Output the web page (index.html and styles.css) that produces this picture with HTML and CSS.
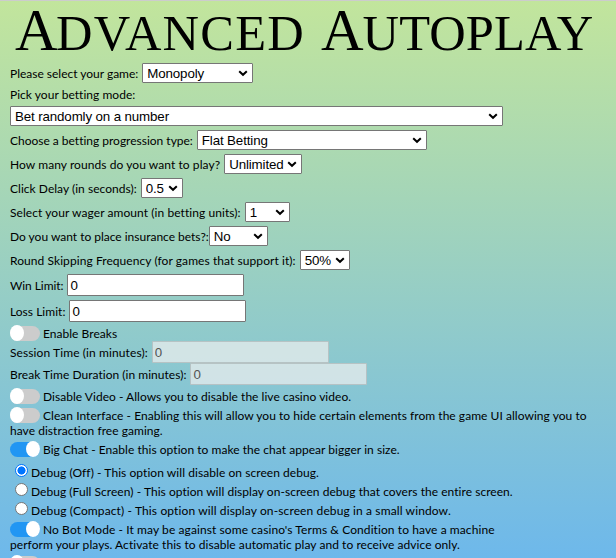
FILE: index.html
```html
<!DOCTYPE html>
<html lang="en">
<head>
<meta charset="utf-8">
<title>Advanced Autoplay</title>
<link rel="stylesheet" href="styles.css">
</head>
<body>
<svg width="0" height="0" class="defs"><symbol id="chev" viewBox="0 0 10 7"><path d="M1.2 1.2 5 4.8 8.8 1.2" fill="none" stroke="#000" stroke-width="2"/></symbol></svg>
<main class="panel">
  <h1 class="title"><span class="word first"><span class="cap">A</span>DVANCED</span><span class="word second"><span class="cap">A</span>UTOPLAY</span></h1>
  <div class="row snug"><label>Please select your game:</label><span class="pick w111"><select><option>Monopoly</option></select><svg><use href="#chev"/></svg></span></div>
  <div class="row caption"><label>Pick your betting mode:</label></div>
  <div class="row"><span class="pick w493"><select><option>Bet randomly on a number</option></select><svg><use href="#chev"/></svg></span></div>
  <div class="row snug"><label>Choose a betting progression type:</label><span class="pick w230"><select><option>Flat Betting</option></select><svg><use href="#chev"/></svg></span></div>
  <div class="row loose"><label>How many rounds do you want to play?</label><span class="pick w78"><select><option>Unlimited</option></select><svg><use href="#chev"/></svg></span></div>
  <div class="row"><label>Click Delay (in seconds):</label><span class="pick w42"><select><option>0.5</option></select><svg><use href="#chev"/></svg></span></div>
  <div class="row loose"><label>Select your wager amount (in betting units):</label><span class="pick w45"><select><option>1</option></select><svg><use href="#chev"/></svg></span></div>
  <div class="row snug tight"><label>Do you want to place insurance bets?:</label><span class="pick w59"><select><option>No</option></select><svg><use href="#chev"/></svg></span></div>
  <div class="row loose"><label>Round Skipping Frequency (for games that support it):</label><span class="pick w50"><select><option>50%</option></select><svg><use href="#chev"/></svg></span></div>
  <div class="row field win"><label>Win Limit:</label><input type="text" value="0"></div>
  <div class="row field"><label>Loss Limit:</label><input type="text" value="0"></div>
  <div class="option breaks"><span class="switch"></span>Enable Breaks</div>
  <div class="row field compact session"><label>Session Time (in minutes):</label><input type="text" value="0" disabled></div>
  <div class="row field compact"><label>Break Time Duration (in minutes):</label><input type="text" value="0" disabled></div>
  <div class="option video"><span class="switch"></span>Disable Video - Allows you to disable the live casino video.</div>
  <div class="option clean"><span class="switch"></span>Clean Interface - Enabling this will allow you to hide certain elements from the game UI allowing you to<br>have distraction free gaming.</div>
  <div class="option chat"><span class="switch on"></span>Big Chat - Enable this option to make the chat appear bigger in size.</div>
  <div class="radio"><input type="radio" name="debug" checked><label>Debug (Off) - This option will disable on screen debug.</label></div>
  <div class="radio"><input type="radio" name="debug"><label class="even">Debug (Full Screen) - This option will display on-screen debug that covers the entire screen.</label></div>
  <div class="radio wide"><input type="radio" name="debug"><label>Debug (Compact) - This option will display on-screen debug in a small window.</label></div>
  <div class="option bot"><span class="switch on"></span>No Bot Mode - It may be against some casino's Terms &amp; Condition to have a machine<br><span class="even">perform your plays. Activate this to disable automatic play and to receive advice only.</span></div>
  <div class="option"><span class="switch"></span></div>
</main>
</body>
</html>
```
FILE: styles.css
```css
* { box-sizing: border-box; }
html { height: 558px; overflow: hidden; }
body { margin: 0; }
.defs { display: block; }
.panel {
  height: 558px;
  overflow: hidden;
  padding: 0 10px;
  border-top: 1px solid #ccc;
  background: linear-gradient(#c2e59c, #64b3f4) 0 0 / 100% 620px no-repeat;
  font: 12px/15px Lato, sans-serif;
  letter-spacing: .03px;
  color: #000;
  white-space: nowrap;
}
.title {
  margin: 0;
  height: 60px;
  padding-left: 5px;
  font: 400 50.5px/60px "Liberation Serif", serif;
  letter-spacing: 0;
  display: flex;
}
.word { height: 60px; margin-top: -1px; }
.cap { font-size: 59px; letter-spacing: -1px; }
.word.first { width: 306px; letter-spacing: 1.2px; }
.word.first .cap { letter-spacing: -1.5px; }
.word.second { letter-spacing: .1px; }
.row { height: 24px; display: flex; align-items: center; gap: 4px; }
.row.caption { height: 19px; }
.row.snug { letter-spacing: -.01px; }
.row.loose { letter-spacing: .07px; }
.row.session { letter-spacing: .1px; }
.row.win { letter-spacing: -.07px; }
.row.tight { gap: 0; }
.row.field { height: 26px; }
.row.field.compact { height: 22px; }
.pick { position: relative; height: 20px; flex: none; }
.pick svg { position: absolute; right: 5px; top: 7px; width: 10px; height: 7px; pointer-events: none; }
select {
  display: block;
  appearance: none;
  width: 100%;
  height: 20px;
  margin: 0;
  padding: 0 4px;
  border: 1px solid #767676;
  border-radius: 1px;
  background: #fff;
  color: #000;
  font: 13.333px "Liberation Sans", sans-serif;
  letter-spacing: -.13px;
}
.w111 { width: 111px; }
.w493 { width: 493px; }
.w230 { width: 230px; }
.w78 { width: 78px; }
.w42 { width: 42px; }
.w45 { width: 45px; }
.w59 { width: 59px; }
.w50 { width: 50px; }
.field input {
  width: 177px;
  height: 22px;
  margin: 0;
  padding: 0 2px;
  border: 1px solid #767676;
  border-radius: 1px;
  background: #fff;
  font: 13.333px "Liberation Sans", sans-serif;
}
.field input:disabled { background: rgba(239, 239, 239, .7); border-color: rgba(118, 118, 118, .3); color: #545454; }
.option .switch {
  display: inline-block;
  position: relative;
  width: 30px;
  height: 15px;
  margin-right: 3px;
  border-radius: 8px;
  background: #ccc;
  vertical-align: -3px;
}
.switch::before {
  content: "";
  position: absolute;
  left: 0;
  top: -1px;
  width: 14px;
  height: 16px;
  border-radius: 50%;
  background: #fff;
}
.switch.on { background: #2196f3; }
.switch.on::before { left: 16px; }
.breaks { height: 17px; padding-top: 2px; }
.video { height: 20px; padding-top: 4px; }
.clean { height: 35px; padding-top: 3px; letter-spacing: .04px; }
.chat { height: 22px; padding-top: 2px; letter-spacing: .04px; }
.radio { height: 19px; display: flex; align-items: flex-start; }
.radio label { margin-top: 3px; letter-spacing: .06px; }
.radio .even { letter-spacing: .04px; }
.radio.wide label { letter-spacing: .12px; }
.radio input {
  appearance: none;
  width: 13px;
  height: 13px;
  margin: 2px 3px 0 5px;
  border: 1px solid #767676;
  border-radius: 50%;
  background: #fff;
}
.radio input:checked { border-color: #0075ff; background: radial-gradient(circle, #0075ff 3.8px, #fff 4.3px); }
.bot { height: 34px; padding-top: 3px; letter-spacing: .09px; }
.bot .even { letter-spacing: .05px; }
.bot + .option { padding-top: 3px; }
```
